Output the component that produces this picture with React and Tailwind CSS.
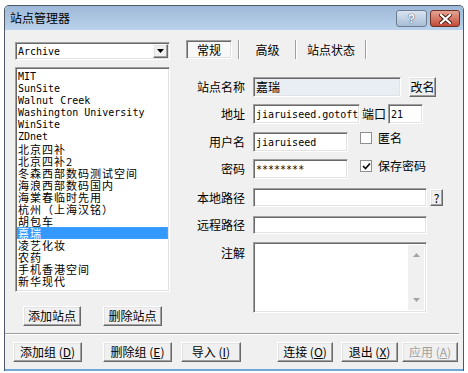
import React from 'react'

const cjk = "font-['Noto_Sans_CJK_SC',sans-serif]"
const mono = "font-['DejaVu_Sans_Mono','Noto_Sans_CJK_SC',monospace]"
const sunken = "border border-t-[#a0a0a0] border-l-[#a0a0a0] border-r-white border-b-white shadow-[inset_1px_1px_0_#696969,inset_-1px_-1px_0_#e3e3e3]"
const raised = "border border-t-white border-l-white border-r-[#696969] border-b-[#696969] shadow-[inset_-1px_-1px_0_#a0a0a0,inset_1px_1px_0_#e3e3e3] bg-[#f0f0f0]"

const sites = [
  'MIT', 'SunSite', 'Walnut Creek', 'Washington University', 'WinSite', 'ZDnet',
  '北京四补', '北京四补2', '冬森西部数码测试空间', '海浪西部数码国内', '海棠春临时先用',
  '杭州（上海汉铭）', '胡包车', '嘉瑞', '凌艺化妆', '农药', '手机香港空间', '新华现代',
]

const isLatin = (s) => /^[\x00-\x7f]+$/.test(s)

const Btn = ({ children, className = '', disabled }) => (
  <button
    type="button"
    className={`${raised} ${cjk} flex items-center justify-center text-[12px] leading-none ${disabled ? 'text-[#a0a0a0]' : 'text-black'} ${className}`}
  >
    {children}
  </button>
)

const Label = ({ children }) => (
  <div className={`${cjk} w-[59px] shrink-0 text-right text-[12px] leading-none text-black`}>{children}</div>
)

const Input = ({ value, className = '' }) => (
  <div className={`${sunken} ${mono} flex items-center bg-white pl-[2px] text-[10px] text-black ${className}`}>
    {value}
  </div>
)

const Check = ({ checked }) => (
  <div className="w-[12px] h-[12px] shrink-0 border border-[#8e8f8f] bg-white flex items-center justify-center">
    {checked && (
      <svg width="9" height="9" viewBox="0 0 9 9">
        <path d="M1 4 L3.5 6.5 L8 1.5" stroke="#000" strokeWidth="1.6" fill="none" />
      </svg>
    )}
  </div>
)

const Sep = () => <div className="w-[2px] h-full border-l border-l-[#a0a0a0] border-r border-r-white" />

export default function App() {
  return (
    <div className="w-[468px] h-[373px] bg-white overflow-hidden">
      <div className="ml-[4px] mt-[5px] w-[460px] h-[366px] flex flex-col border border-[#4d5966] border-b-0 rounded-t-[5px] overflow-hidden">
        {/* title bar */}
        <div className="h-[24px] shrink-0 flex items-center bg-linear-to-b from-[#9eb9d8] to-[#bad2eb] pl-[5px] pr-[3px]">
          <span className={`${cjk} text-[12px] text-black`}>站点管理器</span>
          <div className="ml-auto flex items-center gap-[3px] pt-[1px]">
            <div className="w-[31px] h-[17px] rounded-[3px] border border-[#6d7d90] bg-linear-to-b from-[#d9e4f1] to-[#a8bdd6] flex items-center justify-center">
              <span className="font-['Liberation_Sans',sans-serif] font-bold text-[12px] leading-none text-white [text-shadow:0_0_1px_#2d3f55,0_0_1px_#2d3f55]">?</span>
            </div>
            <div className="w-[30px] h-[17px] rounded-[3px] border border-[#6b3026] bg-linear-to-b from-[#e5a493] to-[#c24a38] flex items-center justify-center">
              <svg width="13" height="10" viewBox="0 0 13 10">
                <path d="M2 1 L11 9 M11 1 L2 9" stroke="#4a1a12" strokeWidth="4" strokeLinecap="square" />
                <path d="M2 1 L11 9 M11 1 L2 9" stroke="#fff" strokeWidth="2.2" strokeLinecap="square" />
              </svg>
            </div>
          </div>
        </div>

        {/* client */}
        <div className="flex-1 bg-[#f0f0f0] flex flex-col border-b-[2px] border-b-[#6fa8d8]">
          <div className="h-[303px] shrink-0 flex">
            {/* left column */}
            <div className="pl-[10px] pt-[12px] w-[165px] shrink-0 flex flex-col">
              <div className={`${sunken} h-[18px] bg-white flex items-center`}>
                <span className={`${mono} text-[10px] pl-[2px] text-black`}>Archive</span>
                <div className={`${raised} ml-auto mr-[1px] w-[15px] h-[14px] flex items-center justify-center`}>
                  <svg width="7" height="4" viewBox="0 0 7 4"><path d="M0 0 H7 L3.5 4 Z" fill="#000" /></svg>
                </div>
              </div>
              <div className={`${sunken} mt-[7px] h-[225px] bg-white pt-[3px] pl-[1px] pr-[1px] flex flex-col`}>
                {sites.map((s) => (
                  <div
                    key={s}
                    className={`h-[12px] shrink-0 flex items-center pl-[1px] whitespace-nowrap ${isLatin(s) ? `${mono} text-[10px] leading-[12px]` : `${cjk} text-[11px] leading-[12px] tracking-[1px]`} ${s === '嘉瑞' ? 'bg-[#3399ff] text-white outline-1 outline-dotted outline-[#d08a3c] -outline-offset-1' : 'text-black'}`}
                  >
                    {s}
                  </div>
                ))}
              </div>
              <div className="mt-[14px] flex">
                <Btn className="ml-[8px] w-[58px] h-[20px]">添加站点</Btn>
                <Btn className="ml-[22px] w-[59px] h-[20px]">删除站点</Btn>
              </div>
            </div>

            {/* right column */}
            <div className="pl-[16px] pt-[10px] flex flex-col">
              <div className="h-[19px] flex items-center">
                <div className={`${sunken} w-[46px] h-[19px] bg-[#f8f8f8] flex items-center justify-center ${cjk} text-[12px] leading-none text-black`}>常规</div>
                <div className="ml-[6px] h-full"><Sep /></div>
                <div className={`w-[55px] text-center ${cjk} text-[12px] leading-none text-black`}>高级</div>
                <div className="h-full"><Sep /></div>
                <div className={`w-[68px] text-center ${cjk} text-[12px] leading-none text-black`}>站点状态</div>
                <div className="h-full"><Sep /></div>
              </div>

              <div className="mt-[18px] h-[20px] flex items-center">
                <Label>站点名称</Label>
                <div className={`${sunken} ml-[8px] w-[148px] h-[20px] bg-[#e9eef4] flex items-center pl-[2px] ${cjk} text-[12px] text-black`}>嘉瑞</div>
                <Btn className="ml-[8px] w-[27px] h-[20px]">改名</Btn>
              </div>

              <div className="mt-[7px] h-[20px] flex items-center">
                <Label>地址</Label>
                <Input className="ml-[8px] w-[107px] h-[20px]" value="jiaruiseed.gotoft" />
                <span className={`${cjk} ml-[2px] text-[12px] leading-none text-black`}>端口</span>
                <Input className="ml-[2px] w-[35px] h-[20px]" value="21" />
              </div>

              <div className="mt-[8px] h-[20px] flex items-center">
                <Label>用户名</Label>
                <Input className="ml-[8px] w-[95px] h-[20px]" value="jiaruiseed" />
                <div className="ml-[12px] self-start"><Check /></div>
                <span className={`${cjk} ml-[6px] self-start text-[12px] leading-[12px] text-black`}>匿名</span>
              </div>

              <div className="mt-[7px] h-[20px] flex items-center">
                <Label>密码</Label>
                <Input className="ml-[8px] w-[95px] h-[20px]" value="********" />
                <div className="ml-[12px] self-start mt-[1px]"><Check checked /></div>
                <span className={`${cjk} ml-[6px] self-start mt-[1px] text-[12px] leading-[12px] text-black`}>保存密码</span>
              </div>

              <div className="mt-[9px] h-[19px] flex items-center">
                <Label>本地路径</Label>
                <Input className="ml-[8px] w-[174px] h-[19px]" value="" />
                <Btn className="ml-[3px] w-[13px] h-[17px] font-['Liberation_Sans',sans-serif] text-[10px]">?</Btn>
              </div>

              <div className="mt-[9px] h-[18px] flex items-center">
                <Label>远程路径</Label>
                <Input className="ml-[8px] w-[174px] h-[18px]" value="" />
              </div>

              <div className="mt-[8px] flex items-start">
                <div className="pt-[5px]"><Label>注解</Label></div>
                <div className={`${sunken} ml-[8px] w-[174px] h-[71px] bg-white flex justify-end p-[2px]`}>
                  <div className="w-[16px] h-full bg-[#f0f0f0] flex flex-col items-center justify-between py-[8px]">
                    <svg width="7" height="4" viewBox="0 0 7 4"><path d="M0 4 H7 L3.5 0 Z" fill="#a3a3a3" /></svg>
                    <svg width="7" height="4" viewBox="0 0 7 4"><path d="M0 0 H7 L3.5 4 Z" fill="#a3a3a3" /></svg>
                  </div>
                </div>
              </div>
            </div>
          </div>

          <div className="mr-[4px] h-[2px] border-t border-t-[#a0a0a0] border-b border-b-white" />

          <div className="mt-[7px] flex">
            <Btn className="ml-[8px] w-[69px] h-[20px]">添加组 (<u>D</u>)</Btn>
            <Btn className="ml-[21px] w-[69px] h-[20px]">删除组 (<u>E</u>)</Btn>
            <Btn className="ml-[9px] w-[60px] h-[20px]">导入 (<u>I</u>)</Btn>
            <Btn className="ml-[36px] w-[56px] h-[20px]">连接 (<u>O</u>)</Btn>
            <Btn className="ml-[8px] w-[57px] h-[20px]">退出 (<u>X</u>)</Btn>
            <Btn className="ml-[4px] w-[56px] h-[20px]" disabled>应用 (<u>A</u>)</Btn>
          </div>
        </div>
      </div>
    </div>
  )
}
